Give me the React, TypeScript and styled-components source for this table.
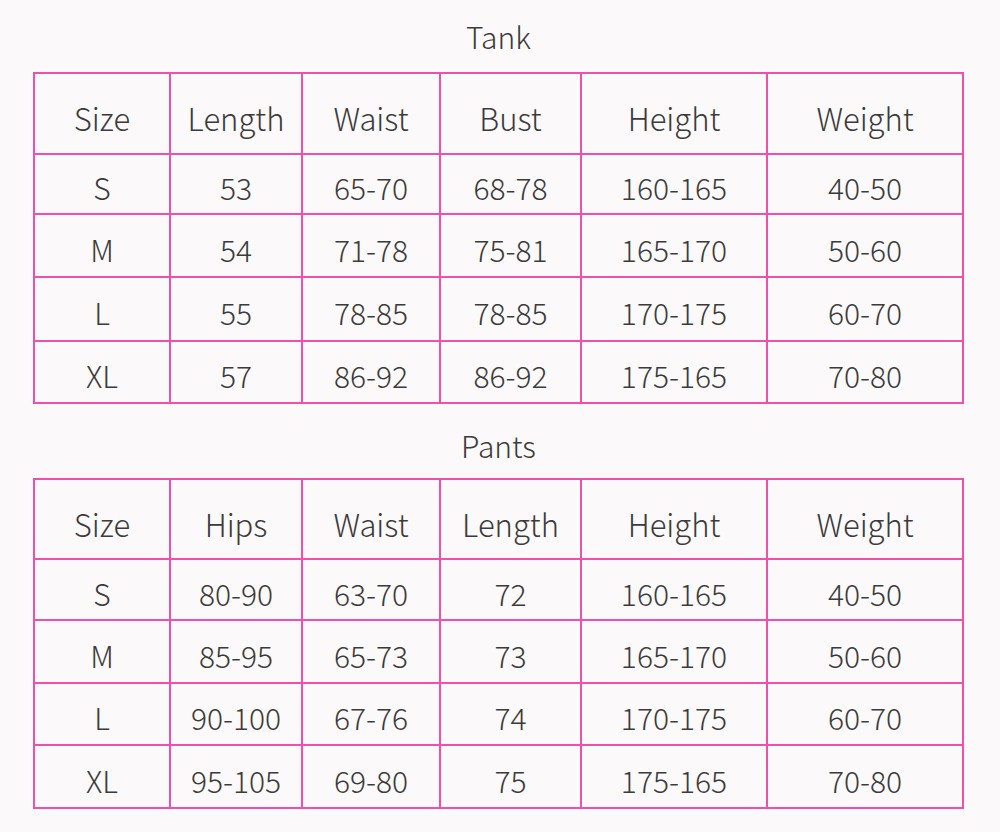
import React from "react";
import styled, { createGlobalStyle } from "styled-components";

const Global = createGlobalStyle`
  html, body { margin: 0; padding: 0; background: #fbf9fa; }
  body { font-family: "Noto Sans CJK SC", "Noto Sans", sans-serif; color: #3b3b3b; }
`;

const Page = styled.div`
  width: 1000px;
  height: 832px;
  box-sizing: border-box;
  padding: 0 0 0 33px;
  display: flex;
  flex-direction: column;
`;

const Section = styled.section<{ $gap: number }>`
  display: flex;
  flex-direction: column;
  margin-top: ${(p) => p.$gap}px;
`;

const Title = styled.h2<{ $h: number }>`
  margin: 0;
  width: 931px;
  height: ${(p) => p.$h}px;
  display: flex;
  align-items: center;
  justify-content: center;
  font-size: 30px;
  font-weight: 300;
  color: #3b3b3b;
`;

const Grid = styled.div<{ $rows: string }>`
  display: grid;
  width: 931px;
  box-sizing: border-box;
  grid-template-columns: 136px 132px 138px 141px 186px 196px;
  grid-template-rows: ${(p) => p.$rows};
  border-left: 2px solid #ef4fae;
  border-top: 2px solid #ef4fae;
`;

const Cell = styled.div<{ $head?: boolean }>`
  box-sizing: border-box;
  border-right: 2px solid #ef4fae;
  border-bottom: 2px solid #ef4fae;
  display: flex;
  align-items: center;
  justify-content: center;
  padding-top: ${(p) => (p.$head ? 8 : 6)}px;
  font-size: ${(p) => (p.$head ? 31 : 30)}px;
  font-weight: 300;
  line-height: 1;
  color: #3b3b3b;
`;

type TableProps = { head: string[]; rows: string[][]; heights: number[] };

const SizeTable = ({ head, rows, heights }: TableProps) => (
  <Grid $rows={heights.map((h) => `${h}px`).join(" ")}>
    {head.map((h) => (
      <Cell key={h} $head>
        {h}
      </Cell>
    ))}
    {rows.map((r, i) => r.map((c, j) => <Cell key={`${i}-${j}`}>{c}</Cell>))}
  </Grid>
);

const tank = {
  head: ["Size", "Length", "Waist", "Bust", "Height", "Weight"],
  rows: [
    ["S", "53", "65-70", "68-78", "160-165", "40-50"],
    ["M", "54", "71-78", "75-81", "165-170", "50-60"],
    ["L", "55", "78-85", "78-85", "170-175", "60-70"],
    ["XL", "57", "86-92", "86-92", "175-165", "70-80"],
  ],
};

const pants = {
  head: ["Size", "Hips", "Waist", "Length", "Height", "Weight"],
  rows: [
    ["S", "80-90", "63-70", "72", "160-165", "40-50"],
    ["M", "85-95", "65-73", "73", "165-170", "50-60"],
    ["L", "90-100", "67-76", "74", "170-175", "60-70"],
    ["XL", "95-105", "69-80", "75", "175-165", "70-80"],
  ],
};

export default function App() {
  return (
    <>
      <Global />
      <Page>
        <Section $gap={0}>
          <Title $h={72}>Tank</Title>
          <SizeTable {...tank} heights={[81, 60, 63, 64, 62]} />
        </Section>
        <Section $gap={8}>
          <Title $h={66}>Pants</Title>
          <SizeTable {...pants} heights={[80, 61, 63, 62, 63]} />
        </Section>
      </Page>
    </>
  );
}
